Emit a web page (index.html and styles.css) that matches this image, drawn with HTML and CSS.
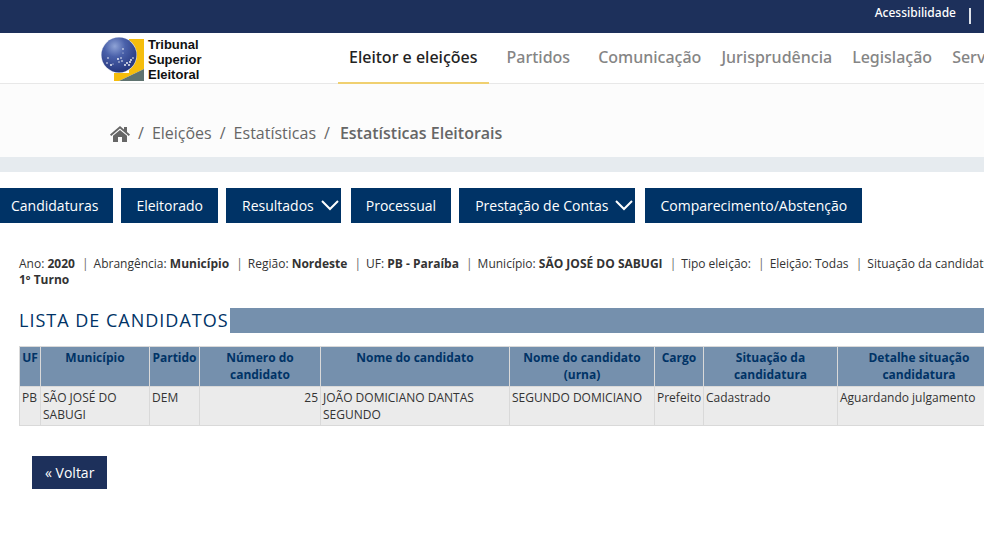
FILE: index.html
```html
<!DOCTYPE html>
<html lang="pt-BR">
<head>
  <meta charset="UTF-8" />
  <meta name="viewport" content="width=device-width, initial-scale=1.0" />
  <title>Estatísticas Eleitorais</title>
  <link rel="stylesheet" href="styles.css">
</head>
<body>
  <!-- Top bar -->
  <div class="topbar">
    <a href="#">Acessibilidade</a>
    <span class="topbar-divider"></span>
  </div>

  <!-- Logo and main menu -->
  <header class="header">
    <a href="#" class="logo">
      <svg width="44" height="44" viewBox="0 0 44 44" aria-hidden="true">
        <defs>
          <radialGradient id="globe" cx="38%" cy="25%" r="75%">
            <stop offset="0" stop-color="#8fa3d6" />
            <stop offset="0.4" stop-color="#4a61aa" />
            <stop offset="1" stop-color="#26377e" />
          </radialGradient>
        </defs>
        <path d="M28 2h15v30L18 44H13V36h15z" fill="#f5bd0c" />
        <path d="M43 32v12H18z" fill="#5f7370" />
        <circle cx="18" cy="18" r="18" fill="#dfe3ee" />
        <circle cx="18" cy="18" r="17.500" fill="url(#globe)" />
        <g fill="#fff">
          <circle cx="22" cy="12" r="0.800" />
          <circle cx="22" cy="16" r="0.500" />
          <circle cx="7" cy="21" r="0.800" />
          <circle cx="6" cy="26" r="0.800" />
          <circle cx="10" cy="28" r="0.900" />
          <circle cx="12" cy="27" r="0.600" />
          <circle cx="17" cy="22" r="0.900" />
          <circle cx="20" cy="21" r="0.800" />
          <circle cx="21" cy="24" r="0.800" />
          <circle cx="18" cy="25" r="0.700" />
          <circle cx="24" cy="28" r="0.900" />
          <circle cx="26" cy="26" r="0.900" />
          <circle cx="28" cy="28" r="0.900" />
          <circle cx="29" cy="25" r="0.900" />
          <circle cx="30" cy="23" r="0.900" />
          <circle cx="32" cy="21" r="0.800" />
        </g>
      </svg>
      <span>Tribunal<br>Superior<br>Eleitoral</span>
    </a>
    <nav class="menu">
      <a href="#" class="active">Eleitor e eleições</a>
      <a href="#">Partidos</a>
      <a href="#">Comunicação</a>
      <a href="#">Jurisprudência</a>
      <a href="#">Legislação</a>
      <a href="#">Serviços</a>
    </nav>
  </header>

  <!-- Breadcrumb -->
  <nav class="breadcrumb">
    <a href="#" aria-label="Início">
      <svg width="20" height="16" viewBox="0 0 20 16" aria-hidden="true">
        <path d="M10 0L0 8.500l1.200 1.400L10 2.600l8.800 7.300L20 8.500l-3-2.500V1h-3v2.400z" />
        <path d="M10 4L3 9.800V16h5v-5h4v5h5V9.800z" />
      </svg>
    </a>
    <span>/</span>
    <a href="#">Eleições</a>
    <span>/</span>
    <a href="#">Estatísticas</a>
    <span>/</span>
    <strong>Estatísticas Eleitorais</strong>
  </nav>

  <!-- Section buttons -->
  <div class="tabs">
    <button type="button">Candidaturas</button>
    <button type="button">Eleitorado</button>
    <button type="button" class="dropdown">Resultados
      <svg width="18" height="11" viewBox="0 0 18 11" aria-hidden="true"><path d="M1 1l8 8 8-8" /></svg>
    </button>
    <button type="button">Processual</button>
    <button type="button" class="dropdown">Prestação de Contas
      <svg width="18" height="11" viewBox="0 0 18 11" aria-hidden="true"><path d="M1 1l8 8 8-8" /></svg>
    </button>
    <button type="button">Comparecimento/Abstenção</button>
  </div>

  <main class="content">
    <div class="filters">
      <span>Ano: <b>2020</b></span>
      <span>Abrangência: <b>Município</b></span>
      <span>Região: <b>Nordeste</b></span>
      <span>UF: <b>PB - Paraíba</b></span>
      <span>Município: <b>SÃO JOSÉ DO SABUGI</b></span>
      <span>Tipo eleição:</span>
      <span>Eleição: Todas</span>
      <span>Situação da candidatura:</span>
    </div>
    <div class="filters"><b>1º Turno</b></div>

    <h1 class="title">LISTA DE CANDIDATOS</h1>

    <table class="candidates">
      <colgroup>
        <col class="col-uf">
        <col class="col-city">
        <col class="col-party">
        <col class="col-number">
        <col class="col-name">
        <col class="col-ballot">
        <col class="col-office">
        <col class="col-status">
        <col class="col-detail">
      </colgroup>
      <thead>
        <tr>
          <th>UF</th>
          <th>Município</th>
          <th>Partido</th>
          <th>Número do<br>candidato</th>
          <th>Nome do candidato</th>
          <th>Nome do candidato<br>(urna)</th>
          <th>Cargo</th>
          <th>Situação da<br>candidatura</th>
          <th>Detalhe situação<br>candidatura</th>
        </tr>
      </thead>
      <tbody>
        <tr>
          <td>PB</td>
          <td>SÃO JOSÉ DO SABUGI</td>
          <td>DEM</td>
          <td class="number">25</td>
          <td>JOÃO DOMICIANO DANTAS SEGUNDO</td>
          <td>SEGUNDO DOMICIANO</td>
          <td>Prefeito</td>
          <td>Cadastrado</td>
          <td>Aguardando julgamento</td>
        </tr>
      </tbody>
    </table>

    <button type="button" class="back">« Voltar</button>
  </main>
</body>
</html>
```
FILE: styles.css
```css
/* Base styling */
* {
  box-sizing: border-box;
}
body {
  font-family: "Open Sans", "Noto Sans", sans-serif;
  background-color: #fff;
  color: #333;
  margin: 0;
  overflow-x: hidden;
}
a {
  color: inherit;
  text-decoration: none;
}
button {
  font-family: inherit;
  border: none;
  cursor: pointer;
}
/* Top bar */
.topbar {
  display: flex;
  justify-content: flex-end;
  gap: 13px;
  height: 33px;
  padding: 4px 13px 0 0;
  background-color: #1d305b;
  color: #fff;
  font-family: "Noto Sans", sans-serif;
  font-size: 12px;
  font-weight: 500;
  line-height: 17px;
}
.topbar-divider {
  width: 2px;
  height: 16px;
  margin-top: 4px;
  background-color: #dfe3ea;
}
/* Header */
.header {
  display: flex;
  height: 51px;
  padding-left: 101px;
  border-bottom: 1px solid #e8e8e8;
}
.logo {
  display: flex;
  flex: none;
  gap: 3px;
  width: 237px;
  padding-top: 4px;
  color: #111;
  font-family: "Liberation Sans", Arial, sans-serif;
  font-size: 13px;
  font-weight: bold;
  line-height: 15px;
}
.menu {
  display: flex;
  flex: none;
  color: #858585;
  font-family: "Noto Sans", sans-serif;
  font-size: 16px;
  font-weight: 500;
  line-height: 48px;
  white-space: nowrap;
}
.menu a {
  height: 51px;
  padding: 0 10px;
}
.menu a:nth-child(-n+2) {
  margin-right: 8px;
}
.menu .active {
  padding: 0 11px;
  color: #222;
  border-bottom: 2px solid #f0d070;
}
/* Breadcrumb */
.breadcrumb {
  display: flex;
  align-items: center;
  gap: 8px;
  padding: 36px 0 10px 110px;
  border-bottom: 15px solid #e6ebef;
  background-color: #fcfcfc;
  color: #666;
  font-size: 16px;
  line-height: 27px;
}
.breadcrumb strong {
  margin-left: 2px;
  font-weight: 600;
}
.breadcrumb svg {
  display: block;
  fill: #666;
}
/* Section buttons */
.tabs {
  display: flex;
  gap: 8px;
  margin-top: 16px;
  margin-left: -4px;
}
.tabs button {
  flex: none;
  height: 35px;
  padding: 0 15px;
  background-color: #003366;
  color: #fff;
  font-size: 14px;
  font-weight: 500;
}
.tabs .dropdown {
  display: flex;
  align-items: center;
  gap: 7px;
  margin-right: 2px;
  padding: 0 2px 0 16px;
}
.dropdown svg {
  fill: none;
  stroke: #fff;
  stroke-width: 2;
}
/* Report */
.content {
  padding: 33px 0 32px 19px;
}
.filters {
  font-size: 12px;
  line-height: 16px;
  white-space: nowrap;
}
.filters span + span::before {
  content: "|";
  margin: 0 5px 0 4px;
  color: #666;
}
.title {
  display: flex;
  gap: 1px;
  margin: 20px 0 13px;
  color: #003366;
  font-size: 18px;
  font-weight: 400;
  letter-spacing: 1px;
  line-height: 25px;
}
.title::after {
  content: "";
  flex: 1;
  background-color: #7590ad;
}
/* Candidate table */
.candidates {
  table-layout: fixed;
  width: 981px;
  border-collapse: collapse;
  font-size: 12px;
  line-height: 17px;
}
.candidates th, .candidates td {
  padding: 2px;
  border: 1px solid #d9d9d9;
  text-align: left;
  vertical-align: top;
}
.candidates th {
  padding-bottom: 3px;
  background-color: #7590ad;
  color: #003366;
  text-align: center;
}
.candidates td {
  background-color: #ebebeb;
}
.candidates .number {
  text-align: right;
}
.col-uf { width: 21px; }
.col-city { width: 109px; }
.col-party { width: 50px; }
.col-number { width: 121px; }
.col-name { width: 189px; }
.col-ballot { width: 145px; }
.col-office { width: 49px; }
.col-status { width: 134px; }
.col-detail { width: 163px; }
/* Back button */
.back {
  margin: 30px 0 0 13px;
  height: 33px;
  padding: 0 13px;
  background-color: #1d305b;
  color: #fff;
  font-size: 14px;
  font-weight: 500;
}
```
